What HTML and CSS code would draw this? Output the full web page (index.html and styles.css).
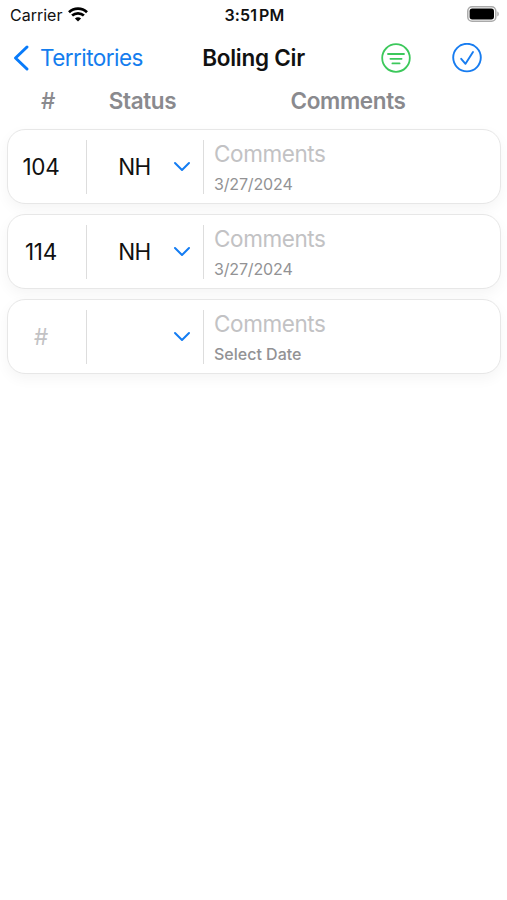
FILE: index.html
```html
<!DOCTYPE html>
<html lang="en">
<head>
<meta charset="utf-8">
<title>Boling Cir</title>
<link rel="stylesheet" href="styles.css">
</head>
<body>
<header class="status-bar">
  <div class="carrier"><span>Carrier</span>
    <svg class="wifi" width="20" height="15" viewBox="0 0 20 15" fill="none" stroke="#000" stroke-width="2.7"><path d="M1 5.2C6 .4 14 .4 19 5.2M4.1 8.6c3.3-3.1 8.5-3.1 11.8 0"/><path d="M6.9 11.4c1.8-1.6 4.4-1.6 6.2 0L10 14.5z" fill="#000" stroke="none"/></svg>
  </div>
  <span class="time">3:51<span class="meridiem">PM</span></span>
  <svg class="battery" width="32" height="16" viewBox="0 0 32 16"><rect x=".8" y=".8" width="28" height="14.4" rx="4.3" fill="#fff" stroke="#aaa" stroke-width="1.5"/><rect x="2.6" y="2.6" width="24.4" height="10.8" rx="2.6"/><path d="M30.3 5.6c2 .6 2 4.2 0 4.8z" fill="#aaa"/></svg>
</header>
<nav class="nav-bar">
  <a class="back"><svg width="17" height="28" viewBox="0 0 17 28" fill="none" stroke="#087bfa" stroke-width="3" stroke-linecap="round" stroke-linejoin="round"><path d="M14 3L2.5 14 14 25"/></svg><span>Territories</span></a>
  <h1 class="title">Boling Cir</h1>
  <div class="actions">
    <svg width="30" height="30" viewBox="0 0 30 30" fill="none" stroke="#3cc85b" stroke-width="1.8" stroke-linecap="round"><circle cx="15" cy="15" r="13.8"/><path d="M7 11h16M9.4 15.8h11.2M11.4 20.4h7.2"/></svg>
    <svg width="30" height="30" viewBox="0 0 30 30" fill="none" stroke="#177cf0" stroke-width="1.9" stroke-linecap="round" stroke-linejoin="round"><circle cx="15" cy="14.6" r="13.8"/><path d="M9.2 15.8l4.3 5L21 9.1"/></svg>
  </div>
</nav>
<div class="columns"><span class="col-number">#</span><span class="col-status">Status</span><span class="col-comments">Comments</span></div>
<main class="list">
  <article class="card">
    <div class="number">104</div>
    <div class="status"><span>NH</span><svg class="chevron" width="18" height="12" viewBox="0 0 18 12"><path d="M2 2l7 7 7-7"/></svg></div>
    <div class="notes"><span class="comment">Comments</span><span class="date">3/27/2024</span></div>
  </article>
  <article class="card">
    <div class="number">114</div>
    <div class="status"><span>NH</span><svg class="chevron" width="18" height="12" viewBox="0 0 18 12"><path d="M2 2l7 7 7-7"/></svg></div>
    <div class="notes"><span class="comment">Comments</span><span class="date">3/27/2024</span></div>
  </article>
  <article class="card">
    <div class="number empty">#</div>
    <div class="status"><span></span><svg class="chevron" width="18" height="12" viewBox="0 0 18 12"><path d="M2 2l7 7 7-7"/></svg></div>
    <div class="notes"><span class="comment">Comments</span><span class="date select">Select Date</span></div>
  </article>
</main>
</body>
</html>
```
FILE: styles.css
```css
* { box-sizing: border-box; }
body { margin: 0; height: 900px; background: #fff; color: #111; font-family: Inter, "Liberation Sans", sans-serif; font-size: 22.5px; overflow: hidden; }
svg { display: block; flex: none; }
.status-bar { height: 30px; display: grid; grid-template-columns: 1fr auto 1fr; align-items: center; padding: 0 8px 0 10px; font-size: 16px; }
.carrier { display: flex; align-items: center; gap: 6px; }
.wifi { margin-top: -1px; }
.time { font-weight: 600; letter-spacing: .1px; }
.meridiem { margin-left: 2px; }
.battery { justify-self: end; margin-top: -2px; }
.nav-bar { height: 56px; display: grid; grid-template-columns: 1fr auto 1fr; align-items: center; padding: 0 13px; }
.back { display: flex; align-items: center; gap: 10px; color: #147dee; letter-spacing: -.55px; }
.back span, .title { margin-top: -2px; }
.title { margin-bottom: 0; font-size: 22.5px; font-weight: 600; letter-spacing: -.25px; }
.actions { display: flex; justify-content: flex-end; gap: 41px; padding-right: 12px; }
.columns { height: 28px; display: grid; grid-template-columns: 90px 105px 1fr; align-items: center; font-weight: 600; color: #8a8a8e; letter-spacing: -.35px; }
.columns span { text-align: center; }
.col-number { padding-left: 6px; font-weight: 500; }
.col-comments { padding-right: 6px; }
.list { display: grid; gap: 10px; padding: 15px 6px 0 7px; }
.card { height: 75px; display: grid; grid-template-columns: 79px 117px 1fr; padding: 10px 0; border: 1px solid #e7e7e7; border-radius: 18px; background: #fff; box-shadow: 0 5px 14px rgba(0,0,0,.045); }
.number { display: flex; align-items: center; justify-content: center; padding: 0 12px 2px 0; border-right: 1px solid #ddd; letter-spacing: -.3px; }
.number.empty { color: #c2c2c4; }
.status { display: grid; grid-template-columns: 1fr 18px; align-items: center; padding-right: 12px; border-right: 1px solid #ddd; letter-spacing: -.5px; }
.status span { padding: 0 0 2px 9px; text-align: center; }
.chevron path { fill: none; stroke: #147df3; stroke-width: 2; stroke-linecap: round; stroke-linejoin: round; }
.notes { display: flex; flex-direction: column; padding-left: 10px; }
.comment { line-height: 28px; color: #c2c2c4; letter-spacing: -.4px; }
.date { margin-top: 6px; line-height: 20px; font-size: 16px; color: #929294; letter-spacing: -.15px; }
.select { font-weight: 500; letter-spacing: 0; }
```
